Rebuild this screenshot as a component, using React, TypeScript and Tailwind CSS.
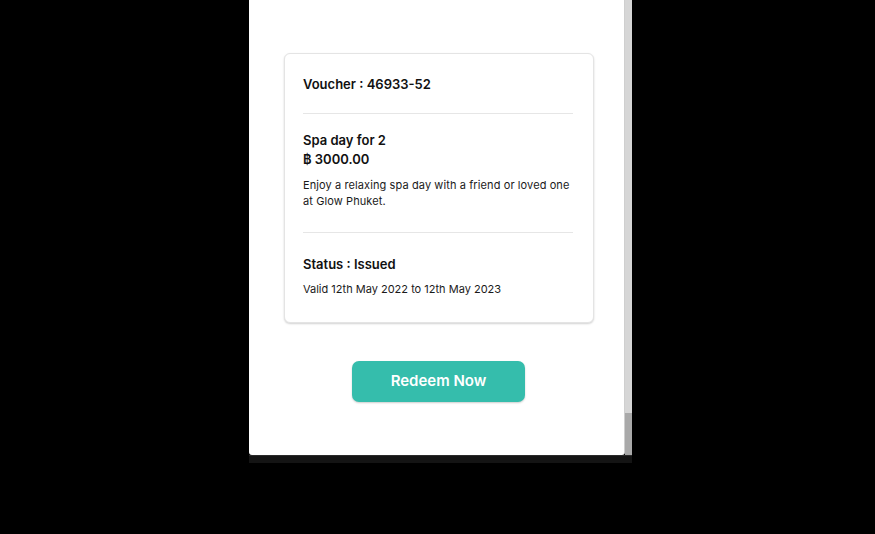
export default function App() {
  return (
    <div className="h-[534px] w-[875px] bg-black overflow-hidden" style={{ fontFamily: 'Inter, "Noto Sans", sans-serif' }}>
      <div className="ml-[249px] flex">
        <div className="h-[455px] w-[376px] bg-white border-r border-[#cfcfcf] rounded-b-[3px]">
          <div className="ml-[35px] mt-[53px] w-[310px] rounded-[6px] border border-[#e4e4e4] bg-white pl-[18px] pr-[20px] pt-[20px] pb-[25px] shadow-[0_1px_2px_rgba(0,0,0,0.18)]">
            <div className="text-[13px] leading-[20px] font-semibold text-[#111]">Voucher : 46933-52</div>
            <div className="mt-[19px] border-t border-[#e6e6e6]" />
            <div className="mt-[16px] text-[13px] leading-[20px] font-semibold text-[#111]">Spa day for 2</div>
            <div className="text-[13px] leading-[19px] font-semibold text-[#111]">฿ 3000.00</div>
            <p className="mt-[8px] text-[11px] leading-[16px] text-[#1a1a1a] tracking-[0.1px]">
              Enjoy a relaxing spa day with a friend or loved one at Glow Phuket.
            </p>
            <div className="mt-[23px] border-t border-[#e6e6e6]" />
            <div className="mt-[21px] text-[13px] leading-[20px] font-semibold text-[#111]">Status : Issued</div>
            <div className="mt-[7px] text-[11px] leading-[16px] text-[#1a1a1a]">Valid 12th May 2022 to 12th May 2023</div>
          </div>
          <button className="ml-[103px] mt-[38px] h-[41px] w-[173px] rounded-[7px] bg-[#35bdac] text-[15px] font-semibold text-white shadow-[0_1px_2px_rgba(0,0,0,0.2)]">
            Redeem Now
          </button>
        </div>
        <div className="flex h-[455px] w-[7px] flex-col justify-end bg-[#d6d6d6]">
          <div className="h-[42px] bg-[#a9a9a9]" />
        </div>
      </div>
      <div className="ml-[249px] h-[8px] w-[383px] bg-[#141414] border-t border-[#2a2a2a]" />
    </div>
  );
}
